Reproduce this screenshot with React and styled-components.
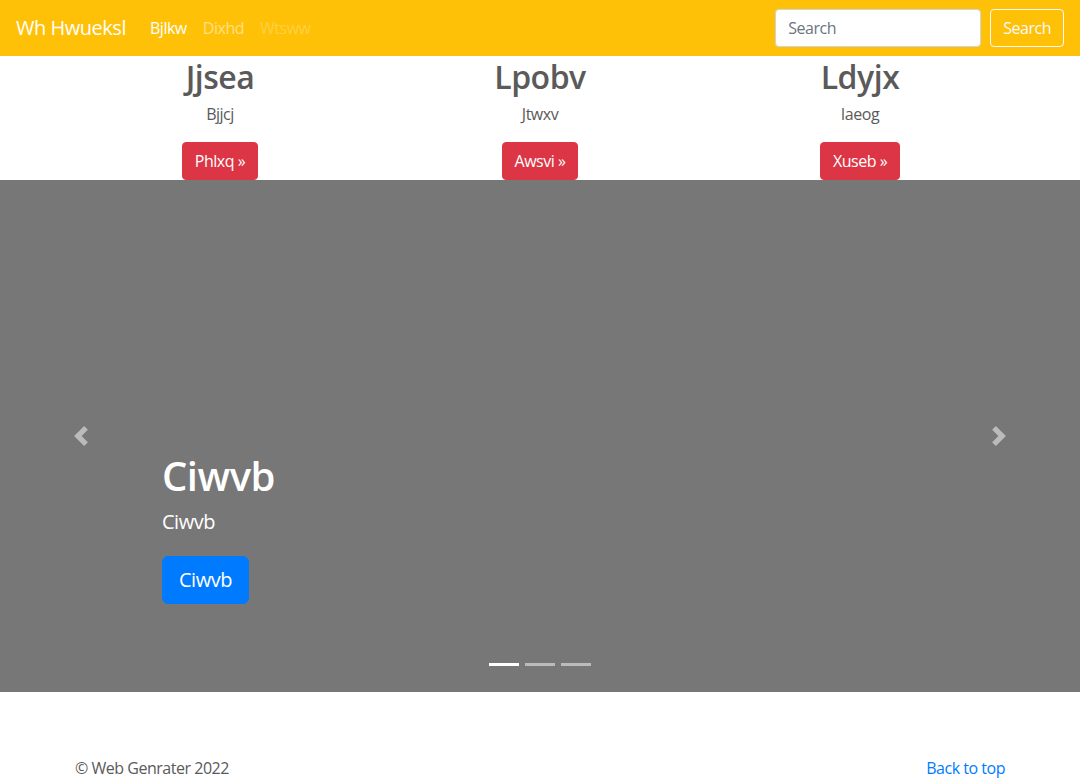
import React from "react";
import styled, { createGlobalStyle } from "styled-components";

const GlobalStyle = createGlobalStyle`
  * { box-sizing: border-box; }
  body {
    margin: 0;
    font-family: "Open Sans", "Liberation Sans", sans-serif;
    font-size: 16px;
    line-height: 1.5;
    letter-spacing: -0.03em;
    color: #5a5a5a;
    background: #fff;
  }
`;

const Navbar = styled.nav`
  height: 56px;
  background-color: #ffc107;
  display: flex;
  align-items: center;
  padding: 8px 16px;
`;

const Brand = styled.a`
  font-size: 20px;
  line-height: 30px;
  color: #fff;
  margin-right: 16px;
  text-decoration: none;
`;

const NavList = styled.div`
  display: flex;
  flex: 1;
`;

const NavLink = styled.a`
  padding: 8px;
  color: ${(p) => (p.active ? "#fff" : p.disabled ? "rgba(255,255,255,.25)" : "rgba(255,255,255,.5)")};
  font-weight: ${(p) => (p.active ? 500 : 400)};
  text-decoration: none;
`;

const SearchForm = styled.form`
  display: flex;
  align-items: center;
  gap: 9px;
`;

const SearchInput = styled.input`
  width: 206px;
  height: 38px;
  padding: 6px 12px;
  font: inherit;
  letter-spacing: inherit;
  color: #495057;
  border: 1px solid #ced4da;
  border-radius: 4px;
  &::placeholder { color: #6c757d; }
`;

const OutlineButton = styled.button`
  height: 38px;
  padding: 6px 12px;
  font: inherit;
  letter-spacing: inherit;
  color: #f8f9fa;
  background: transparent;
  border: 1px solid #f8f9fa;
  border-radius: 4px;
`;

const Container = styled.div`
  width: 960px;
  margin: 0 auto;
  padding: 0 15px;
`;

const Marketing = styled.div`
  display: grid;
  grid-template-columns: repeat(3, 1fr);
  margin: 0 -15px;
`;

const Column = styled.div`
  padding: 0 15px;
  text-align: center;
`;

const Title = styled.h2`
  margin: 0 0 6px;
  padding-top: 2px;
  font-size: 32px;
  font-weight: 600;
  line-height: 1.2;
`;

const Text = styled.p`
  margin: 0 0 16px;
`;

const DangerButton = styled.a`
  display: inline-block;
  padding: 6px 12px;
  color: #fff;
  background: #dc3545;
  border: 1px solid #dc3545;
  border-radius: 4px;
  text-decoration: none;
`;

const Carousel = styled.div`
  position: relative;
  height: 512px;
  background: #777;
  margin-bottom: 64px;
`;

const Caption = styled.div`
  position: absolute;
  left: 15%;
  right: 15%;
  bottom: 48px;
  padding: 20px 0;
  color: #fff;
  z-index: 10;
`;

const CaptionTitle = styled.h1`
  margin: 0 0 8px;
  font-size: 40px;
  font-weight: 600;
  line-height: 1.2;
`;

const CaptionText = styled.p`
  margin: 0 0 20px;
  font-size: 20px;
  line-height: 1.4;
`;

const PrimaryButton = styled.a`
  display: inline-block;
  padding: 8px 16px;
  font-size: 20px;
  line-height: 1.5;
  color: #fff;
  background: #007bff;
  border: 1px solid #007bff;
  border-radius: 6px;
  text-decoration: none;
`;

const Control = styled.a`
  position: absolute;
  top: 0;
  bottom: 0;
  ${(p) => (p.side === "prev" ? "left: 0;" : "right: 0;")}
  width: 15%;
  display: flex;
  align-items: center;
  justify-content: center;
  opacity: 0.5;
`;

const Indicators = styled.ol`
  position: absolute;
  left: 0;
  right: 0;
  bottom: 10px;
  margin: 0 0 16px;
  padding: 0;
  list-style: none;
  display: flex;
  justify-content: center;
`;

const Indicator = styled.li`
  width: 30px;
  height: 3px;
  margin: 0 3px;
  background: ${(p) => (p.active ? "#fff" : "rgba(255,255,255,.5)")};
`;

const FooterRow = styled.footer`
  display: flex;
  justify-content: space-between;
  line-height: 24px;
`;

const TopLink = styled.a`
  color: #007bff;
  text-decoration: none;
`;

const Chevron = ({ dir }) => (
  <svg width="20" height="20" viewBox="0 0 8 8" fill="#fff">
    {dir === "prev" ? (
      <path d="M5.25 0l-4 4 4 4 1.5-1.5L4.25 4l2.5-2.5L5.25 0z" />
    ) : (
      <path d="M2.75 0l-1.5 1.5L3.75 4l-2.5 2.5L2.75 8l4-4-4-4z" />
    )}
  </svg>
);

const columns = [
  { title: "Jjsea", text: "Bjjcj", button: "Phlxq" },
  { title: "Lpobv", text: "Jtwxv", button: "Awsvi" },
  { title: "Ldyjx", text: "Iaeog", button: "Xuseb" },
];

export default function App() {
  return (
    <>
      <GlobalStyle />
      <Navbar>
        <Brand href="#">Wh Hwueksl</Brand>
        <NavList>
          <NavLink href="#" active>Bjlkw</NavLink>
          <NavLink href="#">Dixhd</NavLink>
          <NavLink href="#" disabled>Wtsww</NavLink>
        </NavList>
        <SearchForm onSubmit={(e) => e.preventDefault()}>
          <SearchInput type="text" placeholder="Search" />
          <OutlineButton type="submit">Search</OutlineButton>
        </SearchForm>
      </Navbar>

      <Container>
        <Marketing>
          {columns.map((c) => (
            <Column key={c.title}>
              <Title>{c.title}</Title>
              <Text>{c.text}</Text>
              <DangerButton href="#">{c.button} &raquo;</DangerButton>
            </Column>
          ))}
        </Marketing>
      </Container>

      <Carousel>
        <Caption>
          <CaptionTitle>Ciwvb</CaptionTitle>
          <CaptionText>Ciwvb</CaptionText>
          <CaptionText>
            <PrimaryButton href="#">Ciwvb</PrimaryButton>
          </CaptionText>
        </Caption>
        <Control side="prev" href="#"><Chevron dir="prev" /></Control>
        <Control side="next" href="#"><Chevron dir="next" /></Control>
        <Indicators>
          <Indicator active />
          <Indicator />
          <Indicator />
        </Indicators>
      </Carousel>

      <Container>
        <FooterRow>
          <span>© Web Genrater 2022</span>
          <TopLink href="#">Back to top</TopLink>
        </FooterRow>
      </Container>
    </>
  );
}
